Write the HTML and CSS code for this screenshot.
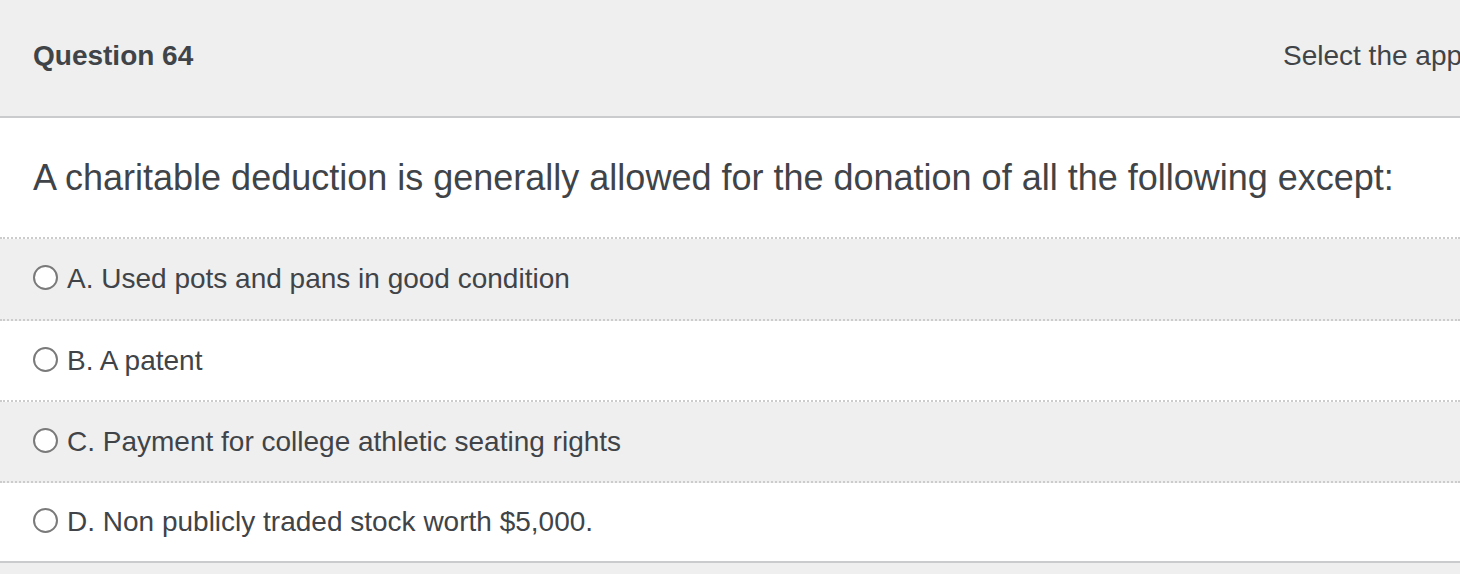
FILE: index.html
```html
<!DOCTYPE html>
<html>
<head>
<meta charset="utf-8">
<link rel="stylesheet" href="styles.css">
</head>
<body>
<div class="page">
  <div class="qhead">
    <div class="qnum">Question 64</div>
    <div class="qhint">Select the appropriate response</div>
  </div>
  <div class="qtext">A charitable deduction is generally allowed for the donation of all the following except:</div>
  <div class="options">
    <label class="opt shaded first"><span class="radio"></span><span class="otext">A. Used pots and pans in good condition</span></label>
    <label class="opt"><span class="radio"></span><span class="otext">B. A patent</span></label>
    <label class="opt shaded"><span class="radio"></span><span class="otext">C. Payment for college athletic seating rights</span></label>
    <label class="opt last"><span class="radio"></span><span class="otext">D. Non publicly traded stock worth $5,000.</span></label>
  </div>
  <div class="footer"></div>
</div>
</body>
</html>
```

FILE: styles.css
```css
html, body {
  margin: 0;
  padding: 0;
  overflow: hidden;
  background: #ffffff;
}
.page {
  width: 1460px;
  font-family: "Liberation Sans", Arial, Helvetica, sans-serif;
  color: #404448;
}
.qhead {
  display: flex;
  justify-content: space-between;
  align-items: center;
  height: 116px;
  background: #efefef;
  border-bottom: 2px solid #c9cbcd;
  padding-left: 33px;
  overflow: hidden;
  white-space: nowrap;
}
.qnum {
  font-size: 28px;
  font-weight: bold;
  margin-top: -4px;
}
.qhint {
  font-size: 28px;
  flex-shrink: 0;
  margin-right: -300px;
  margin-top: -4px;
  width: 477px;
}
.qtext {
  font-size: 36px;
  padding: 0 33px;
  height: 119px;
  display: flex;
  align-items: center;
  border-bottom: 2px dotted #cccccc;
  white-space: nowrap;
}
.options {
  display: flex;
  flex-direction: column;
}
.opt {
  display: flex;
  align-items: center;
  gap: 9px;
  height: 79px;
  padding-left: 33px;
  border-bottom: 2px dotted #cccccc;
  font-size: 28px;
}
.opt.first {
  height: 80px;
}
.opt.shaded {
  background: #efefef;
}
.opt.last {
  height: 78px;
  border-bottom: 2px solid #c9cbcd;
}
.radio {
  width: 21px;
  height: 21px;
  border: 2px solid #7a7a7a;
  border-radius: 50%;
  background: #ffffff;
  flex-shrink: 0;
  margin-top: -3px;
}
.footer {
  height: 20px;
  background: #efefef;
}
```
